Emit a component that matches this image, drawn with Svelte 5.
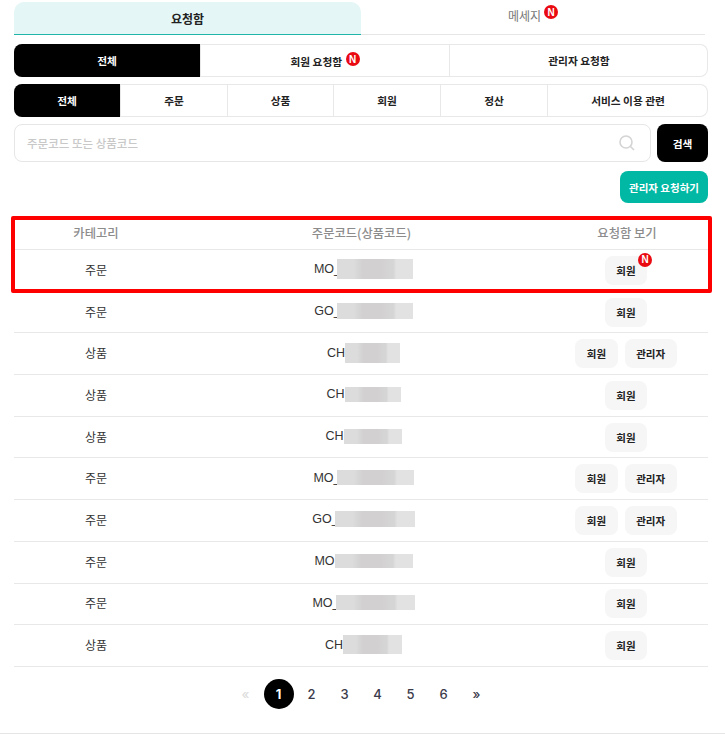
<script lang="ts">
	const tabs = ['전체', '주문', '상품', '회원', '정산', '서비스 이용 관련'];
	const rows = [
		{ cat: '주문', code: 'MO_', w: 76, h: 20, views: ['회원'], isNew: true },
		{ cat: '주문', code: 'GO_', w: 76, h: 16, views: ['회원'] },
		{ cat: '상품', code: 'CH', w: 55, h: 20, views: ['회원', '관리자'] },
		{ cat: '상품', code: 'CH', w: 56, h: 15, views: ['회원'] },
		{ cat: '상품', code: 'CH', w: 58, h: 15, views: ['회원'] },
		{ cat: '주문', code: 'MO_', w: 77, h: 15, views: ['회원', '관리자'] },
		{ cat: '주문', code: 'GO_', w: 80, h: 16, views: ['회원', '관리자'] },
		{ cat: '주문', code: 'MO', w: 78, h: 14, views: ['회원'] },
		{ cat: '주문', code: 'MO_', w: 79, h: 15, views: ['회원'] },
		{ cat: '상품', code: 'CH', w: 59, h: 19, views: ['회원'] }
	];
	const pages = [1, 2, 3, 4, 5, 6];
</script>

<div class="page">
	<div class="tabs">
		<button class="tab active">요청함</button>
		<button class="tab">메세지<span class="new">N</span></button>
	</div>

	<div class="seg who">
		<button class="on">전체</button>
		<button>회원 요청함 <span class="new">N</span></button>
		<button>관리자 요청함</button>
	</div>

	<div class="seg kinds">
		{#each tabs as t, i}
			<button class:on={i === 0}>{t}</button>
		{/each}
	</div>

	<div class="search">
		<div class="field">
			<span class="ph">주문코드 또는 상품코드</span>
			<svg width="18" height="18" viewBox="0 0 18 18" fill="none" stroke="#d4d4d4" stroke-width="1.6">
				<circle cx="8" cy="8" r="6" />
				<path d="M12.5 12.5 16 16" />
			</svg>
		</div>
		<button class="go">검색</button>
	</div>

	<div class="actions">
		<button class="ask">관리자 요청하기</button>
	</div>

	<div class="table">
		<div class="highlight"></div>
		<div class="row head">
			<div>카테고리</div>
			<div class="code-head">주문코드(상품코드)</div>
			<div>요청함 보기</div>
		</div>
		{#each rows as r}
			<div class="row">
				<div class="cat">{r.cat}</div>
				<div class="code">{r.code}<span class="mask" class:cut={r.code.endsWith('_')} style="width: {r.w}px; height: {r.h}px"></span></div>
				<div class="views">
					{#each r.views as v}
						<button class="chip">
							{v}
							{#if r.isNew}<span class="new corner">N</span>{/if}
						</button>
					{/each}
				</div>
			</div>
		{/each}
	</div>

	<div class="pager">
		<span class="arrow off">«</span>
		{#each pages as p}
			<span class="num" class:cur={p === 1}>{p}</span>
		{/each}
		<span class="arrow">»</span>
	</div>
</div>

<style>
	:global(body) {
		background: #fff;
	}

	.page {
		box-sizing: border-box;
		width: 725px;
		height: 751px;
		padding: 2px 17px 0 14px;
		font-family: "Noto Sans CJK KR", "Liberation Sans", sans-serif;
		color: #222;
		overflow: hidden;
		position: relative;
	}

	.page::after {
		content: '';
		position: absolute;
		left: 0;
		right: 0;
		top: 733px;
		border-top: 1px solid #e5e5e5;
	}

	button {
		font-family: inherit;
		border: none;
		background: none;
		padding: 0;
		color: inherit;
		cursor: pointer;
	}

	.tabs {
		display: grid;
		grid-template-columns: 347px 1fr;
		height: 33px;
		margin-right: 3px;
	}

	.tab {
		font-size: 12px;
		font-weight: 400;
		color: #777;
		border-bottom: 1px solid #e6e6e6;
		padding-bottom: 7px;
	}

	.tab.active {
		background: #e4f6f6;
		border-radius: 10px 10px 0 0;
		border-bottom: 1px solid #1fb5a8;
		color: #222;
		font-weight: 700;
		padding-bottom: 0;
	}

	.new {
		display: inline-flex;
		align-items: center;
		justify-content: center;
		width: 14px;
		height: 14px;
		border-radius: 50%;
		background: #ea0b12;
		color: #fff;
		font-family: "Liberation Sans", sans-serif;
		font-size: 10px;
		font-weight: 700;
		vertical-align: 3px;
		margin-left: 1px;
	}

	.tab .new {
		margin-left: 3px;
		vertical-align: 5px;
	}

	.seg {
		display: grid;
		height: 33px;
		box-sizing: border-box;
		box-shadow: inset 0 0 0 1px #e8e8e8;
		border-radius: 8px;
		overflow: hidden;
	}

	.seg button {
		font-weight: 700;
		font-size: 10.7px;
		border-left: 1px solid #e8e8e8;
	}

	.seg button:first-child {
		border-left: none;
	}

	.seg .on {
		background: #000;
		color: #fff;
	}

	.who {
		margin-top: 9px;
		grid-template-columns: 186px 249px 1fr;
	}

	.kinds {
		margin-top: 7px;
		grid-template-columns: 106px 107px 106px 107px 107px 1fr;
	}

	.search {
		display: flex;
		gap: 6px;
		margin-top: 7px;
		height: 38px;
	}

	.field {
		flex: 1;
		display: flex;
		align-items: center;
		justify-content: space-between;
		box-sizing: border-box;
		border: 1px solid #e6e6e6;
		border-radius: 8px;
		padding: 0 14px 0 12px;
	}

	.ph {
		font-size: 11.5px;
		font-weight: 500;
		color: #c8c8c8;
	}

	.go {
		width: 51px;
		border-radius: 8px;
		background: #000;
		color: #fff;
		font-size: 10.7px;
		font-weight: 700;
	}

	.actions {
		display: flex;
		justify-content: flex-end;
		margin-top: 9px;
	}

	.ask {
		width: 88px;
		height: 32px;
		border-radius: 8px;
		background: #00b8a3;
		color: #fff;
		font-size: 10.5px;
		font-weight: 700;
	}

	.table {
		position: relative;
		margin-top: 12px;
	}

	.highlight {
		position: absolute;
		left: -3px;
		right: -4px;
		top: 1px;
		height: 77px;
		box-sizing: border-box;
		border: 4px solid #f00;
		border-radius: 2px;
		pointer-events: none;
		z-index: 2;
	}

	.row {
		display: grid;
		grid-template-columns: 164px 368px 1fr;
		align-items: center;
		text-align: center;
		height: 41.7px;
		box-sizing: border-box;
		border-bottom: 1px solid #e8e8e8;
		font-size: 12px;
		color: #333;
	}

	.row.head {
		height: 35px;
		padding-top: 2px;
		color: #8c8c8c;
		font-size: 12.3px;
		font-weight: 500;
	}

	.code-head {
		padding-right: 1px;
	}

	.cat {
		margin-top: -2px;
	}

	.code {
		display: flex;
		align-items: center;
		justify-content: center;
		margin-top: -2px;
		padding-left: 3px;
		font-family: "Liberation Sans", sans-serif;
		font-size: 12.5px;
	}

	.mask {
		background: linear-gradient(90deg, #dcdcdc 0 22%, #d2d0d0 34% 58%, #d6d5d5 70% 74%, #e2e2e2 78%);
	}

	.mask.cut {
		margin-left: -4px;
	}

	.views {
		display: flex;
		justify-content: center;
		gap: 7px;
		padding-right: 2px;
	}

	.chip {
		position: relative;
		height: 29px;
		padding: 0 11.5px;
		border-radius: 8px;
		background: #f6f6f6;
		font-size: 10.5px;
		font-weight: 700;
		color: #222;
	}

	.corner {
		position: absolute;
		top: -3px;
		right: -5px;
		margin: 0;
	}

	.pager {
		display: flex;
		justify-content: center;
		align-items: center;
		gap: 3px;
		margin-top: 12px;
		font-family: Inter, sans-serif;
		font-size: 13px;
		font-weight: 500;
		color: #3a3a4a;
	}

	.num,
	.arrow {
		display: flex;
		align-items: center;
		justify-content: center;
		width: 30px;
		height: 30px;
		border-radius: 50%;
	}

	.arrow.off {
		color: #ddd;
	}

	.num.cur {
		background: #000;
		color: #fff;
		font-weight: 700;
	}
</style>
